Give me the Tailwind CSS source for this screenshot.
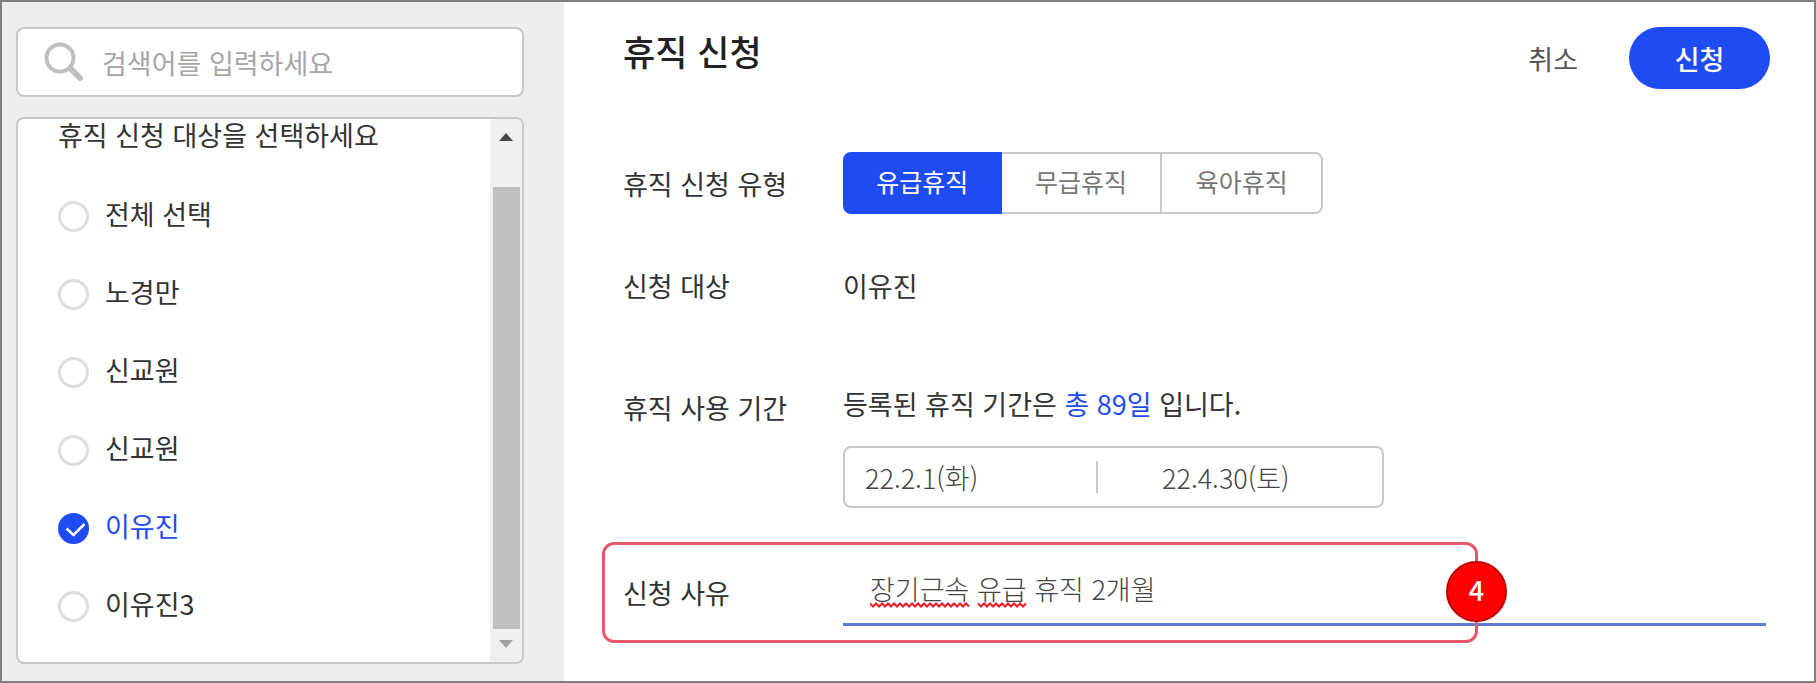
<!DOCTYPE html>
<html lang="ko">
<head>
    <meta charset="UTF-8">
    <meta name="viewport" content="width=device-width, initial-scale=1.0">
    <title>휴직 신청</title>
    <script src="https://cdn.jsdelivr.net/npm/@tailwindcss/browser@4"></script>
</head>
<body class="flex min-h-screen border-2 border-[#808080] bg-white font-['Noto_Sans_CJK_KR',sans-serif] text-[27px] leading-10 text-[#333333]">
    <aside class="flex w-[562px] shrink-0 flex-col gap-5 bg-[#eeeeee] pt-[25px] pr-10 pb-[17px] pl-[14px]">
        <div class="flex h-[70px] items-center gap-[18px] rounded-lg border-2 border-[#c8c8c8] bg-white px-[26px]">
            <svg class="size-10 shrink-0 text-[#bfbfbf]" viewBox="0 0 40 40" fill="none" stroke="currentColor" stroke-linecap="round">
                <circle cx="16" cy="16" r="13.5" stroke-width="4"></circle>
                <line x1="26.5" y1="26.5" x2="36" y2="36" stroke-width="6"></line>
            </svg>
            <input type="text" aria-label="검색" placeholder="검색어를 입력하세요" class="min-w-0 flex-1 pt-0.5 outline-none placeholder:text-[#a6a6a6]">
        </div>

        <div class="flex flex-1 rounded-lg border-2 border-[#c8c8c8] bg-white">
            <fieldset class="min-w-0 flex-1 pl-10">
                <legend class="mb-[22px] h-9 leading-8">휴직 신청 대상을 선택하세요</legend>
                <label class="flex h-[78px] items-center gap-4">
                    <input type="radio" name="target" class="size-[31px] shrink-0 appearance-none rounded-full border-3 border-[#dedede]">
                    <span class="pb-1">전체 선택</span>
                </label>
                <label class="flex h-[78px] items-center gap-4">
                    <input type="radio" name="target" class="size-[31px] shrink-0 appearance-none rounded-full border-3 border-[#dedede]">
                    <span class="pb-1">노경만</span>
                </label>
                <label class="flex h-[78px] items-center gap-4">
                    <input type="radio" name="target" class="size-[31px] shrink-0 appearance-none rounded-full border-3 border-[#dedede]">
                    <span class="pb-1">신교원</span>
                </label>
                <label class="flex h-[78px] items-center gap-4">
                    <input type="radio" name="target" class="size-[31px] shrink-0 appearance-none rounded-full border-3 border-[#dedede]">
                    <span class="pb-1">신교원</span>
                </label>
                <label class="flex h-[78px] items-center gap-4 text-[#1f4bf5]">
                    <span class="relative flex">
                        <input type="radio" name="target" checked class="size-[31px] shrink-0 appearance-none rounded-full bg-[#1f4bf5]">
                        <svg class="pointer-events-none absolute inset-0 size-[31px]" viewBox="0 0 31 31" fill="none" stroke="#ffffff" stroke-width="2.5">
                            <polyline points="8.5 15.5 15.5 22 26.5 11"></polyline>
                        </svg>
                    </span>
                    <span class="pb-1">이유진</span>
                </label>
                <label class="flex h-[78px] items-center gap-4">
                    <input type="radio" name="target" class="size-[31px] shrink-0 appearance-none rounded-full border-3 border-[#dedede]">
                    <span class="pb-1">이유진3</span>
                </label>
            </fieldset>
            <!-- scrollbar -->
            <div class="flex w-8 flex-col items-center rounded-r-md bg-[#f0f0f0]">
                <button type="button" aria-label="위로" class="flex h-[68px] w-full justify-center pt-[14px]">
                    <svg class="h-2 w-[14px]" viewBox="0 0 14 8" fill="#484848"><path d="M7 0l7 8H0z"></path></svg>
                </button>
                <div class="w-[27px] flex-1 bg-[#bfbfbf]"></div>
                <button type="button" aria-label="아래로" class="flex h-[33px] w-full justify-center pt-[11px]">
                    <svg class="h-2 w-[14px]" viewBox="0 0 14 8" fill="#a0a0a0"><path d="M0 0h14L7 8z"></path></svg>
                </button>
            </div>
        </div>
    </aside>

    <main class="min-w-0 flex-1 pt-[25px] pr-[44px] pl-[59px]">
        <form>
            <header class="flex items-start justify-between">
                <h1 class="text-[35px] leading-[48px] font-medium text-[#222222]">휴직 신청</h1>
                <div class="flex items-center gap-[51px]">
                    <button type="button" class="pt-0.5 text-[#555555]">취소</button>
                    <button type="submit" class="h-[62px] w-[141px] rounded-full bg-[#1f4bf5] pt-0.5 font-medium text-white">신청</button>
                </div>
            </header>

            <div class="mt-[63px] flex items-center">
                <span id="type-label" class="w-[220px] shrink-0 pt-0.5">휴직 신청 유형</span>
                <div role="group" aria-labelledby="type-label" class="flex h-[62px] w-[480px] text-[25px]">
                    <button type="button" aria-pressed="true" class="flex-1 rounded-l-lg bg-[#1f4bf5] pb-1 text-white">유급휴직</button>
                    <button type="button" class="flex-1 border-y-2 border-[#c8c8c8] pb-1 text-[#777777]">무급휴직</button>
                    <button type="button" class="flex-1 rounded-r-lg border-2 border-[#c8c8c8] pb-1 text-[#777777]">육아휴직</button>
                </div>
            </div>

            <div class="mt-[52px] flex">
                <span class="w-[220px] shrink-0">신청 대상</span>
                <span>이유진</span>
            </div>

            <div class="mt-[78px] flex">
                <span id="period-label" class="w-[220px] shrink-0 pt-1">휴직 사용 기간</span>
                <div>
                    <p>등록된 휴직 기간은 <span class="text-[#1f4bf5]">총 89일</span> 입니다.</p>
                    <div role="group" aria-labelledby="period-label" class="mt-[22px] flex h-[62px] w-[541px] items-center rounded-lg border-2 border-[#c8c8c8] px-5 text-[#444444]">
                        <input type="text" aria-label="시작일" value="22.2.1(화)" class="min-w-0 flex-1 pt-0.5 font-light outline-none">
                        <span class="mr-16 h-8 w-0.5 bg-[#c8c8c8]"></span>
                        <input type="text" aria-label="종료일" value="22.4.30(토)" class="w-[200px] pt-0.5 font-light outline-none">
                    </div>
                </div>
            </div>

            <div class="relative mt-[50px] flex items-center">
                <label for="reason" class="w-[220px] shrink-0 pt-0.5">신청 사유</label>
                <div class="relative mr-1 flex-1">
                    <input type="text" id="reason" value="장기근속 유급 휴직 2개월" spellcheck="false" class="h-[68px] w-full border-b-3 border-[#6079d2] px-[27px] pb-1 font-light text-[#444444] outline-none">
                    <!-- spelling marks -->
                    <svg class="pointer-events-none absolute top-11 left-[27px] h-[6px] w-[162px]" viewBox="0 0 162 6" fill="none" stroke="#ec1c24" stroke-width="2">
                        <path d="M0 1.5l3 3l3-3l3 3l3-3l3 3l3-3l3 3l3-3l3 3l3-3l3 3l3-3l3 3l3-3l3 3l3-3l3 3l3-3l3 3l3-3l3 3l3-3l3 3l3-3l3 3l3-3l3 3l3-3l3 3l3-3l3 3l3-3l3 3"></path>
                        <path d="M108 1.5l3 3l3-3l3 3l3-3l3 3l3-3l3 3l3-3l3 3l3-3l3 3l3-3l3 3l3-3l3 3l3-3"></path>
                    </svg>
                </div>
                <div class="pointer-events-none absolute -top-4 -bottom-[17px] -left-[21px] w-[876px] rounded-xl border-3 border-[#e6586b]">
                    <span class="absolute top-4 -right-8 flex size-[61px] items-center justify-center rounded-full border-2 border-[#c00000] bg-[#ff0000] pb-1 font-medium text-white">4</span>
                </div>
            </div>
        </form>
    </main>
</body>
</html>
